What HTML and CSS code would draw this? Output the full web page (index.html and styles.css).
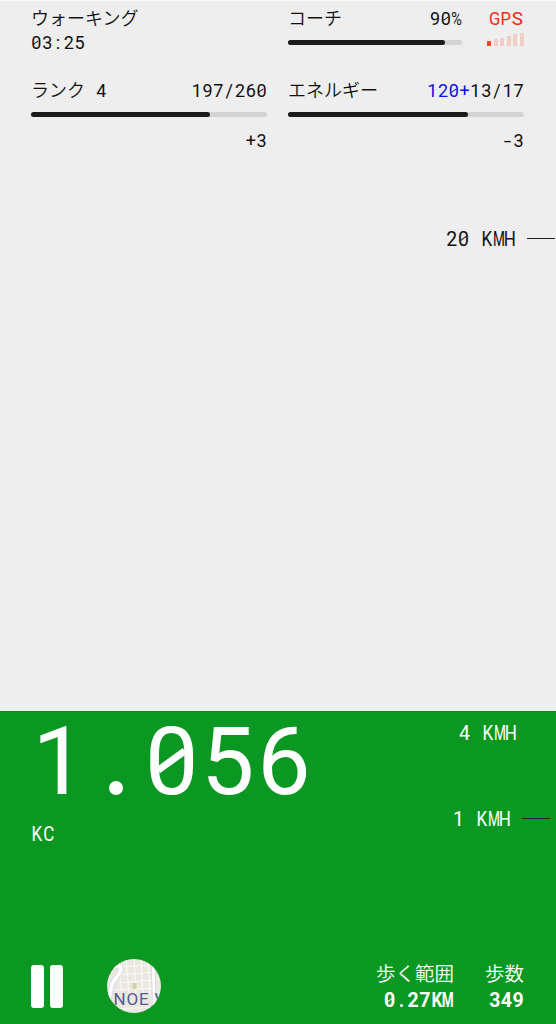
FILE: index.html
```html
<!DOCTYPE html>
<html lang="ja">
<head>
    <meta charset="UTF-8">
    <meta name="viewport" content="width=device-width, initial-scale=1.0">
    <title>ウォーキング</title>
    <link rel="stylesheet" href="styles.css">
</head>
<body>
    <div class="screen">
        <!-- Stats -->
        <header class="stats">
            <div class="activity">
                <div class="row"><span>ウォーキング</span></div>
                <div class="row"><span class="mono">03:25</span></div>
            </div>
            <div class="coach">
                <div class="coach-level">
                    <div class="row"><span>コーチ</span><span class="mono">90%</span></div>
                    <div class="bar"><div class="bar-fill" style="width: 90.2%"></div></div>
                </div>
                <div class="gps">
                    <div class="row"><span class="mono">GPS</span></div>
                    <div class="signal">
                        <i class="on"></i><i></i><i></i><i></i><i></i><i></i>
                    </div>
                </div>
            </div>
            <div class="stat">
                <div class="row"><span class="rank">ランク<span class="mono"> 4</span></span><span class="mono">197/260</span></div>
                <div class="bar"><div class="bar-fill" style="width: 75.8%"></div></div>
                <div class="row change"><span class="mono">+3</span></div>
            </div>
            <div class="stat">
                <div class="row"><span>エネルギー</span><span><span class="mono bonus">120+</span><span class="mono">13/17</span></span></div>
                <div class="bar"><div class="bar-fill" style="width: 76.3%"></div></div>
                <div class="row change"><span class="mono">-3</span></div>
            </div>
        </header>

        <div class="speed speed-max"><span class="mono">20 KMH</span><i class="tick"></i></div>

        <!-- Current speed -->
        <main class="level">
            <div class="level-top">
                <div class="earned">
                    <div class="amount mono">1.056</div>
                    <div class="unit mono">KC</div>
                </div>
                <div class="speeds">
                    <div class="speed"><span class="mono">4 KMH</span></div>
                    <div class="speed speed-min"><span class="mono">1 KMH</span><i class="tick"></i></div>
                </div>
            </div>

            <footer class="controls">
                <button class="pause" aria-label="一時停止"><i></i><i></i></button>
                <svg class="map" viewBox="0 0 54 54">
                    <defs>
                        <clipPath id="round"><circle cx="27" cy="27" r="27"/></clipPath>
                    </defs>
                    <g clip-path="url(#round)">
                        <rect width="54" height="54" fill="#ebe8e1"/>
                        <g stroke="#faf9f6" stroke-width="1.1" fill="none">
                            <path d="M14 8 L54 5 M14 16 L46 13 M12 24 L46 21 M8 31 L46 29 M4 50 L54 48"/>
                            <path d="M19 0 L22 34 M27 0 L29 34 M34 0 L36 34 M41 0 L43 34 M13 18 L15 34"/>
                        </g>
                        <rect x="25.500" y="24" width="4" height="6" fill="#d4d5a7"/>
                        <path d="M1 44 L5 25 L13 13 Q15 8 11 6 L5 9" fill="none" stroke="#ced1da" stroke-width="5.500"/>
                        <path d="M1 44 L5 25 L13 13 Q15 8 11 6 L5 9" fill="none" stroke="#fff" stroke-width="4"/>
                        <path d="M46 0 L47.500 54" stroke="#ced1da" stroke-width="4"/>
                        <path d="M46 0 L47.500 54" stroke="#fff" stroke-width="2.800"/>
                        <text class="map-label" x="6.500" y="45.500">NOE V</text>
                    </g>
                </svg>
                <div class="total total-first">
                    <div>歩く範囲</div>
                    <div class="mono">0.27KM</div>
                </div>
                <div class="total">
                    <div>歩数</div>
                    <div class="mono">349</div>
                </div>
            </footer>
        </main>
    </div>

    <script>
        // put every character in a cell of the same width
        const kinds = { "0": "zero", ".": "dot", "M": "wide", "K": "cap", "H": "cap", "G": "cap", "C": "cap", "P": "cap", "%": "percent", "-": "minus" };

        document.querySelectorAll(".mono").forEach((el) => {
            const text = el.textContent;
            el.textContent = "";
            for (const ch of text) {
                const cell = document.createElement("span");
                cell.className = "cell " + (kinds[ch] || "");
                cell.textContent = ch;
                el.appendChild(cell);
            }
        });
    </script>
</body>
</html>
```
FILE: styles.css
```css
* {
    box-sizing: border-box;
}

body {
    margin: 0;
    font-family: Roboto, "Noto Sans CJK JP", sans-serif;
    font-size: 18px;
    font-weight: 350;
    color: #111;
    background: #eee;
}

.screen {
    display: flex;
    flex-direction: column;
    height: 1024px;
    overflow: hidden;
    border-top: 1px solid #f8f8f8;
}

/* Fixed width characters */
.mono {
    display: inline-flex;
    font-weight: 400;
    white-space: pre;
}

.cell {
    position: relative;
    display: flex;
    justify-content: center;
    width: 0.6em;
}

.cap {
    transform: scaleX(0.87);
}

.wide {
    transform: scaleX(0.7);
}

.percent {
    transform: scaleX(0.8);
}

.minus {
    transform: scaleX(1.5);
}

.zero::after {
    content: "";
    position: absolute;
    left: 0.125em;
    top: calc(50% - 0.045em);
    width: 0.35em;
    height: 0.075em;
    background: currentColor;
    transform: rotate(-36deg);
}

.dot {
    color: transparent;
}

.dot::after {
    content: "";
    position: absolute;
    left: 0.225em;
    top: calc(50% + 0.2em);
    width: 0.155em;
    height: 0.155em;
    border-radius: 50%;
    background: #fff;
}

/* Stats */
.stats {
    display: grid;
    grid-template-columns: 236px 236px;
    grid-template-rows: 71px 78px;
    column-gap: 21px;
    padding: 6px 0 0 31px;
}

.row {
    display: flex;
    justify-content: space-between;
    height: 24px;
    line-height: 24px;
    white-space: nowrap;
}

.rank {
    display: flex;
}

.coach {
    display: flex;
    justify-content: space-between;
}

.coach-level {
    width: 174px;
}

.bar {
    height: 5px;
    margin-top: 9px;
    border-radius: 3px;
    background: #d3d3d5;
}

.stat .bar {
    margin-top: 9px;
}

.stat {
    padding-top: 1px;
}

.bar-fill {
    height: 5px;
    border-radius: 3px;
    background: #1c1a1c;
}

.change {
    margin-top: 12px;
    justify-content: flex-end;
}

.bonus {
    color: #1010e0;
}

.gps {
    color: #f02a20;
    width: 37px;
}

.gps .mono {
    margin-left: 2px;
    font-size: 19px;
}

.signal {
    display: flex;
    align-items: flex-end;
    justify-content: space-between;
    height: 14px;
    margin-top: 1px;
}

.signal i {
    width: 4px;
    height: 7px;
    background: #f1cdc6;
}

.signal i:nth-child(3) { height: 8px; }
.signal i:nth-child(4) { height: 10px; }
.signal i:nth-child(5) { height: 12px; }
.signal i:nth-child(6) { height: 13px; }

.signal .on {
    height: 5px;
    background: #f4471c;
}

/* Speed scale */
.speed {
    display: flex;
    align-items: center;
    justify-content: flex-end;
    height: 26px;
    padding-right: 39px;
    font-size: 19.5px;
}

.speed-max {
    margin-top: 70px;
    padding-right: 1px;
}

.tick {
    width: 28px;
    height: 1px;
    margin: 0 0 1px 11px;
    background: #222;
}

.speed-min {
    margin-top: 60px;
    padding-right: 6px;
}

/* Green area */
.level {
    display: flex;
    flex-direction: column;
    height: 313px;
    margin-top: auto;
    color: #fff;
    background: #0a9822;
    border-top: 1px solid #14861f;
}

.level-top {
    display: flex;
    justify-content: space-between;
    padding: 0 0 0 31px;
}

.amount {
    height: 99px;
    font-size: 95px;
    line-height: 100px;
}

.amount .cell {
    width: 0.592em;
}

.unit {
    display: flex;
    margin-top: 11px;
    font-size: 19.5px;
    line-height: 26px;
}

.speeds {
    padding-top: 8px;
}

.controls {
    display: flex;
    align-items: flex-start;
    height: 65px;
    margin-top: auto;
    padding: 0 32px 0 31px;
}

.pause {
    display: flex;
    gap: 6px;
    margin: 6px 0 0;
    padding: 0;
    border: none;
    background: none;
}

.pause i {
    width: 13px;
    height: 43px;
    border-radius: 3px;
    background: #fff;
}

.map {
    width: 54px;
    height: 54px;
    margin-left: 44px;
}

.map-label {
    font-size: 17px;
    font-weight: 400;
    letter-spacing: 0.8px;
    fill: #555c8c;
}

.total {
    display: flex;
    flex-direction: column;
    align-items: flex-end;
    margin: 3px 0 0 31px;
    font-size: 19.5px;
    line-height: 26px;
}

.total-first {
    margin-left: auto;
}

.total .mono {
    font-weight: 700;
}

.total .dot::after {
    top: calc(50% + 0.16em);
}
```
